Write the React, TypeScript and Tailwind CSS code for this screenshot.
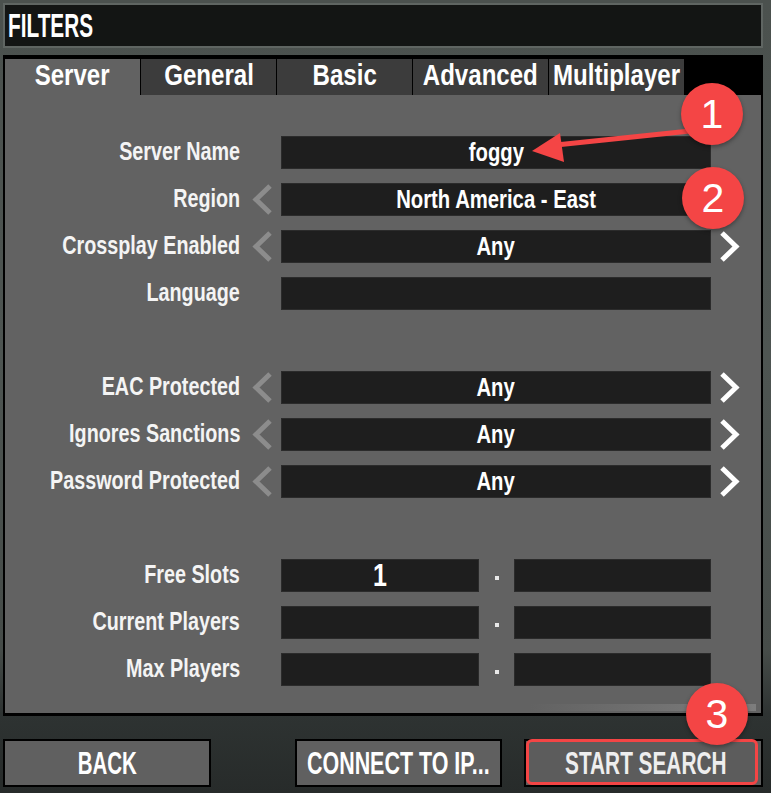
import React from 'react'

// The game font is a tall, very condensed face. Liberation Sans Narrow isn't
// available, so plain Liberation Sans bold is squeezed horizontally instead.
const face = "font-['Liberation_Sans_Narrow','Liberation_Sans',Arial,sans-serif] font-bold"

function Chevron({ dir }: { dir: 'left' | 'right' }) {
  const left = dir === 'left'
  return (
    <svg width="20" height="33" viewBox="0 0 20 33" className="block">
      <polyline
        points={left ? '18,3 4,16.5 18,30' : '2,3 16,16.5 2,30'}
        fill="none"
        stroke={left ? '#8c8c8c' : '#ffffff'}
        strokeWidth="5"
        strokeLinejoin="miter"
      />
    </svg>
  )
}

function Label({ children }: { children: React.ReactNode }) {
  return (
    <div className="flex w-[235px] shrink-0 justify-end pb-[3px] text-[26px] leading-none text-[#f4f4f4]">
      <span className="inline-block origin-right scale-x-[0.76] whitespace-nowrap">{children}</span>
    </div>
  )
}

function Box({ value, width = 'w-[430px]', big = false }: { value?: string; width?: string; big?: boolean }) {
  return (
    <div
      className={`${width} flex h-[33px] shrink-0 items-center justify-center border border-[#2b2b2b] bg-[#1e1e1e] pb-[2px] leading-none text-white ${
        big ? 'text-[32px]' : 'text-[26px]'
      }`}
    >
      {value && <span className="inline-block scale-x-[0.78] whitespace-nowrap">{value}</span>}
    </div>
  )
}

function Row({ label, value, arrows = false }: { label: string; value?: string; arrows?: boolean }) {
  return (
    <div className="flex h-[33px] items-center">
      <Label>{label}</Label>
      <div className="ml-[12px] w-[20px]">{arrows && <Chevron dir="left" />}</div>
      <div className="ml-[9px]">
        <Box value={value} />
      </div>
      <div className="ml-[9px] w-[20px]">{arrows && <Chevron dir="right" />}</div>
    </div>
  )
}

function RangeRow({ label, from }: { label: string; from?: string }) {
  return (
    <div className="flex h-[33px] items-center">
      <Label>{label}</Label>
      <div className="ml-[41px] flex items-center">
        <Box value={from} width="w-[198px]" big />
        <div className="flex w-[35px] justify-center">
          <span className="mt-[4px] block h-[4px] w-[4px] bg-[#e8e8e8]" />
        </div>
        <Box width="w-[197px]" />
      </div>
    </div>
  )
}

const tabs = ['Server', 'General', 'Basic', 'Advanced', 'Multiplayer']

function Badge({ n, className }: { n: string; className: string }) {
  return (
    <div
      className={`absolute flex h-[62px] w-[62px] items-center justify-center rounded-full bg-[#f44545] font-['Liberation_Sans',Arial,sans-serif] text-[41px] font-normal leading-none text-white shadow-[0_2px_4px_rgba(0,0,0,0.35)] ${className}`}
    >
      {n}
    </div>
  )
}

export default function App() {
  return (
    <div className={`relative h-[793px] w-[771px] overflow-hidden bg-[linear-gradient(180deg,#4b514e_0%,#4e5552_45%,#464c49_82%,#2e3332_90%,#272b2a_100%)] ${face}`}>
      {/* title bar */}
      <div className="ml-[3px] mt-[3px] flex h-[45px] w-[760px] items-center border-2 border-[#5f6562] bg-[#131514] pl-[3px]">
        <span className="inline-block origin-left scale-x-[0.63] text-[33px] leading-none text-white">FILTERS</span>
      </div>

      {/* filters panel */}
      <div className="ml-[3px] mt-[7px] w-[760px] border-x-2 border-t-4 border-b-[3px] border-black bg-black">
        <div className="flex h-[36px] gap-px">
          {tabs.map((t, i) => (
            <div
              key={t}
              className={`flex w-[135px] items-center justify-center pb-[4px] text-[29px] leading-none text-white ${
                i === 0 ? 'bg-[#626262]' : 'bg-[#3c3c3c]'
              }`}
            >
              <span className="inline-block scale-x-[0.83] whitespace-nowrap">{t}</span>
            </div>
          ))}
        </div>

        <div className="flex h-[618px] flex-col bg-[#626262] pt-[41px]">
          <div className="flex flex-col gap-[14px]">
            <Row label="Server Name" value="foggy" />
            <Row label="Region" value="North America - East" arrows />
            <Row label="Crossplay Enabled" value="Any" arrows />
            <Row label="Language" />
            <div className="h-[33px]" />
            <Row label="EAC Protected" value="Any" arrows />
            <Row label="Ignores Sanctions" value="Any" arrows />
            <Row label="Password Protected" value="Any" arrows />
            <div className="h-[33px]" />
            <RangeRow label="Free Slots" from="1" />
            <RangeRow label="Current Players" />
            <RangeRow label="Max Players" />
          </div>
          <div className="mb-[2px] ml-[525px] mt-auto h-[7px] w-[226px] bg-gradient-to-r from-[#626262] to-[#7d7d7d]" />
        </div>
      </div>

      {/* bottom buttons */}
      <div className="mt-[23px] flex h-[48px] pl-[3px]">
        <button className="flex w-[208px] items-center justify-center border-2 border-black bg-[#606060] text-white">
          <span className="inline-block scale-x-[0.64] whitespace-nowrap text-[32px] leading-none">BACK</span>
        </button>
        <button className="ml-[84px] flex w-[207px] items-center justify-center border-2 border-black bg-[#606060] text-white">
          <span className="inline-block scale-x-[0.67] whitespace-nowrap text-[32px] leading-none">CONNECT TO IP...</span>
        </button>
        <button className="ml-[22px] flex w-[239px] items-center justify-center border-2 border-black bg-[#5c5c5c] text-[#eeeeee]">
          <span className="inline-block scale-x-[0.65] whitespace-nowrap pl-[8px] text-[32px] leading-none">START SEARCH</span>
        </button>
      </div>

      {/* annotations */}
      <svg className="pointer-events-none absolute left-0 top-0" width="771" height="793">
        <line x1="690" y1="131" x2="556" y2="145" stroke="#f44545" strokeWidth="5" />
        <polygon points="532,151 560,133 564,162" fill="#f44545" />
      </svg>
      <div className="pointer-events-none absolute left-[526px] top-[739px] h-[46px] w-[232px] rounded-[6px] border-[3px] border-[#f44545]" />
      <Badge n="1" className="left-[681px] top-[83px]" />
      <Badge n="2" className="left-[682px] top-[167px]" />
      <Badge n="3" className="left-[686px] top-[683px]" />
    </div>
  )
}
